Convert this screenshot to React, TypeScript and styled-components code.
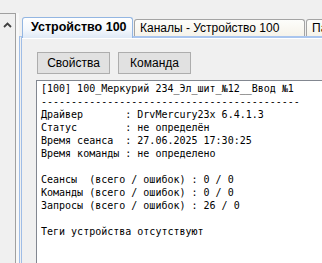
import React from 'react';
import styled, { createGlobalStyle } from 'styled-components';

const Global = createGlobalStyle`
  html, body {
    margin: 0;
    padding: 0;
    background: #f0f0f0;
    overflow: hidden;
  }
`;

const Page = styled.div`
  display: flex;
  flex-direction: row;
  width: 322px;
  height: 263px;
  overflow: hidden;
  font-family: "Liberation Sans", Arial, sans-serif;
  font-size: 12px;
  color: #000;
`;

const Side = styled.div`
  display: flex;
  flex-direction: row;
  flex: none;
  padding-top: 13px;
`;

const SideBox = styled.div`
  width: 15px;
  border-top: 1px solid #a0a0a0;
  border-right: 1px solid #a0a0a0;
  display: flex;
  justify-content: center;
  padding-top: 8px;
  box-sizing: content-box;
`;

const Gutter = styled.div`
  width: 3px;
  background: #f8f8f8;
`;

const TabControl = styled.div`
  flex: 1;
  min-width: 0;
  display: flex;
  flex-direction: column;
`;

const TabStrip = styled.div`
  display: flex;
  align-items: flex-end;
  height: 38px;
  padding-left: 3px;
  gap: 1px;
  white-space: nowrap;
  overflow: hidden;
  position: relative;
  z-index: 1;
`;

const Tab = styled.div<{ $active?: boolean; $w: number }>`
  flex: none;
  box-sizing: border-box;
  width: ${p => p.$w}px;
  height: ${p => (p.$active ? 21 : 17)}px;
  margin-bottom: ${p => (p.$active ? 0 : 2)}px;
  border: 1px solid ${p => (p.$active ? '#93b6e2' : '#a4a4a4')};
  border-bottom: none;
  border-radius: 3px 3px 0 0;
  background: ${p =>
    p.$active
      ? 'linear-gradient(#ffffff, #f3f7fc 60%, #dfe9f6)'
      : 'linear-gradient(#fdfdfb, #f6f3ea)'};
  font-weight: ${p => (p.$active ? 'bold' : 'normal')};
  font-size: ${p => (p.$active ? 12.5 : 12)}px;
  padding-left: ${p => (p.$active ? 8 : 5)}px;
  padding-top: ${p => (p.$active ? 2 : 1)}px;
  line-height: 14px;
  overflow: hidden;
`;

const Panel = styled.div`
  flex: 1;
  display: flex;
  flex-direction: column;
  background: #f0f0f0;
  border-top: 2px solid #a9c5ee;
  border-left: 3px double #9fbde6;
  box-shadow: inset 0 1px 0 #ffffff;
  padding: 14px 0 0 14px;
  margin-top: -2px;
  gap: 6px;
`;

const ButtonRow = styled.div`
  display: flex;
  gap: 8px;
  padding-left: 1px;
`;

const Button = styled.button`
  width: 73px;
  height: 22px;
  box-sizing: border-box;
  border: 1px solid #adadad;
  background: #e1e1e1;
  font-family: "Liberation Sans", Arial, sans-serif;
  font-size: 12px;
  color: #000;
  padding: 0;
`;

const Output = styled.pre`
  flex: 1;
  margin: 0;
  background: #fff;
  border: 1px solid #828790;
  border-right: none;
  border-bottom: none;
  padding: 1px 0 0 4px;
  font-family: "DejaVu Sans Mono", "Liberation Mono", monospace;
  font-size: 10px;
  line-height: 13px;
  color: #000;
  white-space: pre;
  overflow: hidden;
`;

const lines = [
  '[100] 100_Меркурий 234_Эл_шит_№12__Ввод №1',
  '-------------------------------------------',
  'Драйвер       : DrvMercury23x 6.4.1.3',
  'Статус        : не определён',
  'Время сеанса  : 27.06.2025 17:30:25',
  'Время команды : не определено',
  '',
  'Сеансы  (всего / ошибок) : 0 / 0',
  'Команды (всего / ошибок) : 0 / 0',
  'Запросы (всего / ошибок) : 26 / 0',
  '',
  'Теги устройства отсутствуют',
];

export default function App() {
  return (
    <Page>
      <Global />
      <Side>
        <SideBox>
          <svg width="9" height="6" viewBox="0 0 9 6">
            <polyline points="1,5 4.5,1.5 8,5" fill="none" stroke="#404040" strokeWidth="1.8" />
          </svg>
        </SideBox>
        <Gutter />
      </Side>
      <TabControl>
        <TabStrip>
          <Tab $active $w={111}>Устройство 100</Tab>
          <Tab $w={171}>Каналы - Устройство 100</Tab>
          <Tab $w={60}>Параметры</Tab>
        </TabStrip>
        <Panel>
          <ButtonRow>
            <Button>Свойства</Button>
            <Button>Команда</Button>
          </ButtonRow>
          <Output>{lines.join('\n')}</Output>
        </Panel>
      </TabControl>
    </Page>
  );
}
